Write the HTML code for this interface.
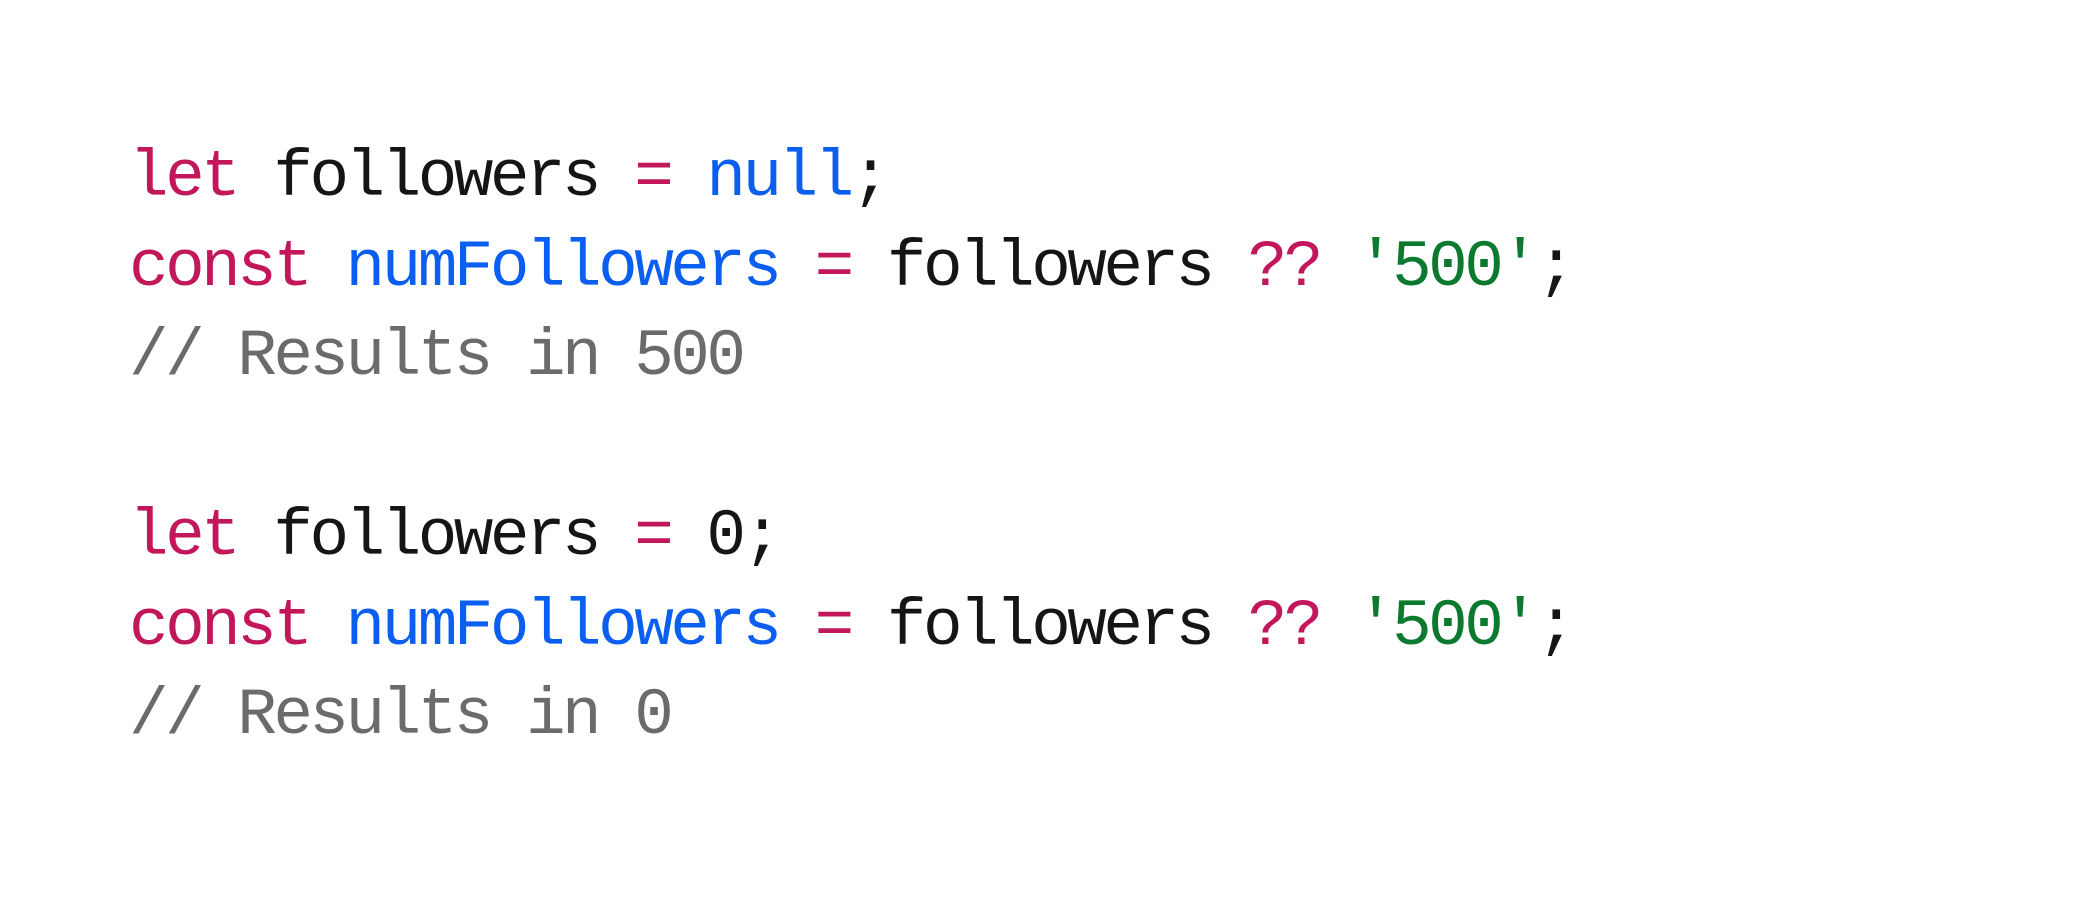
<!DOCTYPE html>
<html><head><meta charset="utf-8"><style>
html,body{margin:0;padding:0;background:#fff;width:2080px;height:908px;overflow:hidden}
.l{position:absolute;left:129px;font-family:"Liberation Mono",monospace;font-size:66px;letter-spacing:-3.52px;line-height:66px;white-space:pre;color:#151515}
.k{color:#c2185b}.b{color:#0a5ef0}.g{color:#0b7a2e}.c{color:#6b6b6b}
</style></head><body>
<div class="l" style="top:145px"><span class="k">let</span> followers <span class="k">=</span> <span class="b">null</span>;</div>
<div class="l" style="top:235px"><span class="k">const</span> <span class="b">numFollowers</span> <span class="k">=</span> followers <span class="k">??</span> <span class="g">'500'</span>;</div>
<div class="l c" style="top:324px">// Results in 500</div>
<div class="l" style="top:504px"><span class="k">let</span> followers <span class="k">=</span> 0;</div>
<div class="l" style="top:594px"><span class="k">const</span> <span class="b">numFollowers</span> <span class="k">=</span> followers <span class="k">??</span> <span class="g">'500'</span>;</div>
<div class="l c" style="top:683px">// Results in 0</div>
</body></html>
